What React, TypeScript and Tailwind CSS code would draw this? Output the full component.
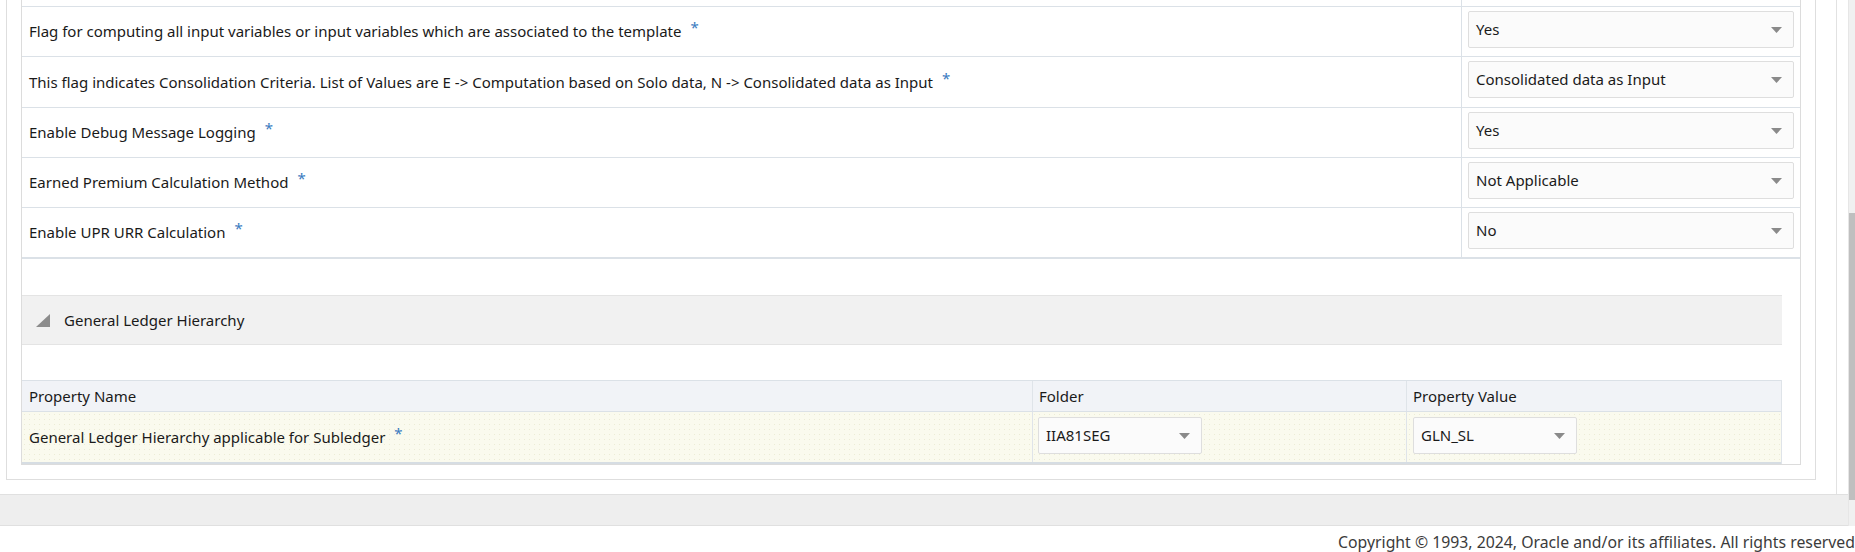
import React from 'react';

const rows = [
  { label: 'Flag for computing all input variables or input variables which are associated to the template', value: 'Yes', h: 'h-[50px]', b: 'border-b' },
  { label: 'This flag indicates Consolidation Criteria. List of Values are E -> Computation based on Solo data, N -> Consolidated data as Input', value: 'Consolidated data as Input', h: 'h-[51px]', b: 'border-b' },
  { label: 'Enable Debug Message Logging', value: 'Yes', h: 'h-[50px]', b: 'border-b' },
  { label: 'Earned Premium Calculation Method', value: 'Not Applicable', h: 'h-[50px]', b: 'border-b' },
  { label: 'Enable UPR URR Calculation', value: 'No', h: 'h-[51px]', b: 'border-b-2' },
];

function Caret() {
  return (
    <svg width="11" height="6" viewBox="0 0 11 6" className="shrink-0">
      <polygon points="0,0 11,0 5.5,6" fill="#8a8a8a" />
    </svg>
  );
}

function Required() {
  return <span className="ml-[9px] inline-block -translate-y-[4px] text-[#3b7bc0]">*</span>;
}

function Select({ value, className }: { value: string; className: string }) {
  return (
    <div
      className={`flex h-[37px] items-center justify-between rounded-[2px] border border-[#dedede] bg-[#fbfbfb] pl-[7px] pr-[11px] ${className}`}
    >
      <span>{value}</span>
      <Caret />
    </div>
  );
}

export default function App() {
  return (
    <div className="flex h-[552px] w-[1855px] flex-col overflow-hidden bg-white font-['Noto_Sans',sans-serif] text-[15px] text-[#1a1a1a]">
      <div className="flex h-[526px]">
        <div className="flex w-[1848px] flex-col">
          {/* scroll box */}
          <div className="h-[494px] w-[1837px] border-r border-[#e2e2e2]">
            <div className="ml-[6px] w-[1810px] border-x border-b border-[#dedede] pb-[14px]">
              <div className="ml-[14px] w-[1780px] border-x border-b border-[#dcdcdc]">
                {/* settings table */}
                <div className="flex h-[7px] border-b border-[#dbe1e7]">
                  <div className="w-[1439px]" />
                  <div className="border-l border-[#dbe1e7]" />
                </div>
                {rows.map((r) => (
                  <div key={r.label} className={`flex ${r.h} ${r.b} border-[#dbe1e7]`}>
                    <div className="flex w-[1439px] items-center pl-[7px]">
                      <span>{r.label}</span>
                      <Required />
                    </div>
                    <div className="flex-1 border-l border-[#dbe1e7] px-[6px] pt-[4px]">
                      <Select value={r.value} className="w-full" />
                    </div>
                  </div>
                ))}

                {/* section header */}
                <div className="mt-[36px] mr-[18px] flex h-[50px] items-center border-y border-[#e4e4e4] bg-[#f1f1f1] pl-[14px]">
                  <svg width="14" height="13" viewBox="0 0 14 13">
                    <polygon points="14,0 14,13 0,13" fill="#8c8c8c" />
                  </svg>
                  <span className="ml-[14px]">General Ledger Hierarchy</span>
                </div>

                {/* property table */}
                <div className="mt-[35px] mr-[18px] border-r border-[#dfe4e9]">
                  <div className="flex h-[32px] items-center border-y border-[#dbe1e7] bg-[#f1f3f7]">
                    <div className="flex h-full w-[1010px] items-center pl-[7px]">Property Name</div>
                    <div className="flex h-full w-[374px] items-center border-l border-[#dfe4e9] pl-[6px]">Folder</div>
                    <div className="flex h-full flex-1 items-center border-l border-[#dfe4e9] pl-[6px]">Property Value</div>
                  </div>
                  <div className="flex h-[52px] border-b-2 border-[#d6dde3] bg-[#fafaee] bg-[radial-gradient(#ececd6_0.8px,transparent_0.8px)] bg-[length:5px_5px]">
                    <div className="flex w-[1010px] items-center pl-[7px]">
                      <span>General Ledger Hierarchy applicable for Subledger</span>
                      <Required />
                    </div>
                    <div className="w-[374px] border-l border-[#dfe4e9] pl-[5px] pt-[5px]">
                      <Select value="IIA81SEG" className="w-[164px]" />
                    </div>
                    <div className="flex-1 border-l border-[#dfe4e9] pl-[6px] pt-[5px]">
                      <Select value="GLN_SL" className="w-[164px]" />
                    </div>
                  </div>
                </div>
              </div>
            </div>
          </div>
          {/* gray band */}
          <div className="h-[32px] border-y border-[#e0e0e0] bg-[#eeeeee]" />
        </div>
        {/* scrollbar */}
        <div className="flex w-[7px] flex-col border-l border-[#e6e6e6] bg-[#f0f0f0] pt-[213px]">
          <div className="h-[287px] bg-[#bfbfbf]" />
        </div>
      </div>
      <div className="flex h-[26px] items-start justify-end whitespace-nowrap pt-[5px] text-[15.8px] leading-[22px] text-[#3b3b3b]">
        Copyright © 1993, 2024, Oracle and/or its affiliates. All rights reserved
      </div>
    </div>
  );
}
